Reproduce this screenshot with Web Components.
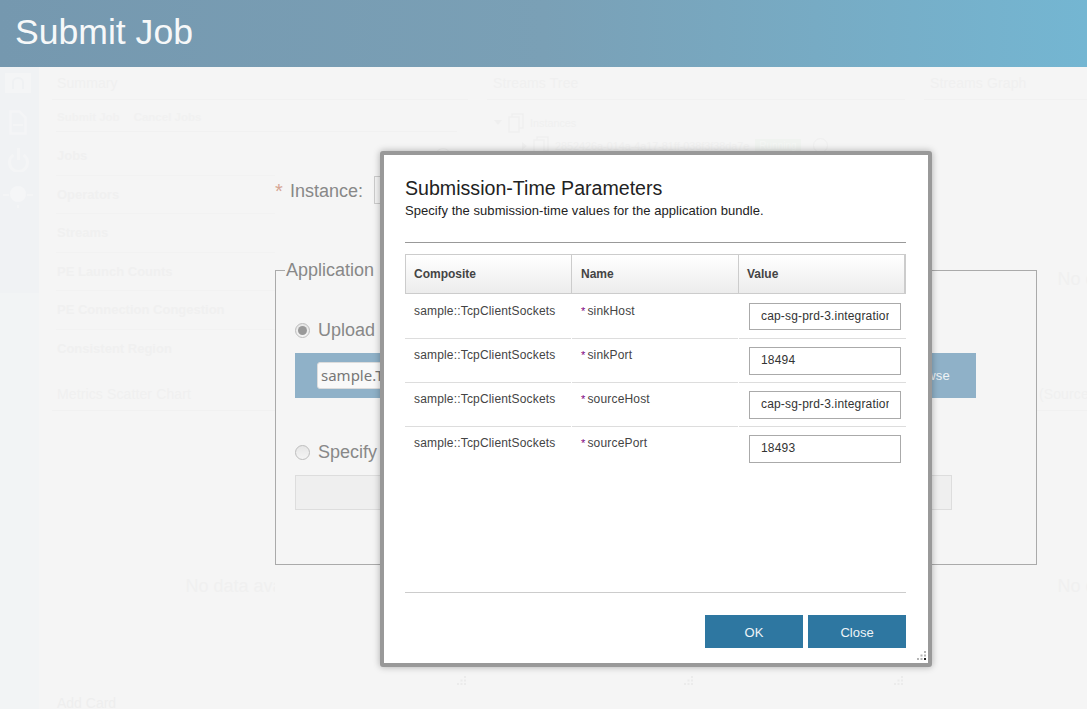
<!DOCTYPE html>
<html>
<head>
<meta charset="utf-8">
<title>Submit Job</title>
<style>
html, body { margin: 0; height: 100%; overflow: hidden; background: #f5f5f5; }
body { font-family: "Liberation Sans", Arial, sans-serif; }
</style>
</head>
<body>
<job-page>
    <job-header slot="header">Submit Job</job-header>

    <side-rail slot="rail"></side-rail>

    <dash-board slot="board">
        <dash-panel style="grid-area: a" heading="Summary">
            <sub-bar>Submit Job<span style="display:inline-block;width:14px"></span>Cancel Jobs</sub-bar>
            <metric-row help>Jobs</metric-row>
            <metric-row>Operators</metric-row>
            <metric-row>Streams</metric-row>
            <metric-row>PE Launch Counts</metric-row>
            <metric-row>PE Connection Congestion</metric-row>
            <metric-row last>Consistent Region</metric-row>
        </dash-panel>
        <dash-panel style="grid-area: b; --pad: 6px" heading="Streams Tree">
            <tree-view></tree-view>
        </dash-panel>
        <dash-panel style="grid-area: c; --pad: 6px" heading="Streams Graph">
            <no-data style="--top: 168px">No data available</no-data>
        </dash-panel>

        <dash-panel style="grid-area: d" heading="Metrics Scatter Chart" grip>
            <no-data style="--top: 164px">No data available</no-data>
        </dash-panel>
        <card-pair style="grid-area: m">
            <dash-panel grip></dash-panel>
            <dash-panel grip></dash-panel>
        </card-pair>
        <dash-panel style="grid-area: g; --pad: 8px" heading="Streams Metrics (Source)">
            <no-data style="--top: 164px">No data available</no-data>
        </dash-panel>
        <add-card style="grid-area: h">Add Card</add-card>
    </dash-board>

    <job-form slot="overlay"></job-form>

    <param-dialog slot="overlay" heading="Submission-Time Parameters"
        note="Specify the submission-time values for the application bundle.">
        <param-row name="sinkHost" value="cap-sg-prd-3.integration.ibmcloud.com"></param-row>
        <param-row name="sinkPort" value="18494"></param-row>
        <param-row name="sourceHost" value="cap-sg-prd-3.integration.ibmcloud.com"></param-row>
        <param-row name="sourcePort" value="18493" last></param-row>
        <dialog-button slot="actions">OK</dialog-button>
        <dialog-button slot="actions">Close</dialog-button>
    </param-dialog>
</job-page>

<script>
// small helper, every element just sets its shadow html once
class Base extends HTMLElement {
    constructor() {
        super();
        this.attachShadow({ mode: "open" });
        this.shadowRoot.innerHTML = this.markup();
    }
    markup() {
        return "<slot></slot>";
    }
}

const FAINT = "#f0f0f0";
const GRIP_DOTS = [[8, 0], [8, 3.5], [4.5, 3.5], [8, 7], [4.5, 7], [1, 7]];

function gripSvg(fill, dark) {
    const dots = GRIP_DOTS.map((d, i) =>
        `<rect x="${d[0]}" y="${d[1]}" width="2" height="2" fill="${i === dark ? "#222" : fill}"/>`).join("");
    return `<svg width="10" height="10" viewBox="0 0 10 10">${dots}</svg>`;
}

class JobPage extends Base {
    markup() {
        return `
        <style>
        :host { display: flex; flex-direction: column; position: relative; width: 100%; height: 709px; overflow: hidden; background: #f5f5f5; }
        .body { display: flex; flex: 1; min-height: 0; }
        </style>
        <slot name="header"></slot>
        <div class="body">
            <slot name="rail"></slot>
            <slot name="board"></slot>
        </div>
        <slot name="overlay"></slot>
        `;
    }
}

class JobHeader extends Base {
    markup() {
        return `
        <style>
        :host { display: flex; align-items: center; flex: none; height: 67px; padding: 0 15px 3px; box-sizing: border-box;
            background: linear-gradient(90deg, #7598af 0%, #7aa0b6 50%, #74b6d2 100%);
            color: #f6f8f9; font-size: 35.6px; }
        </style>
        <slot></slot>
        `;
    }
}

class SideRail extends Base {
    markup() {
        return `
        <style>
        :host { display: block; flex: none; width: 39px; background: #f2f4f5; }
        .top { display: flex; flex-direction: column; align-items: center; height: 226px; padding: 6px 3px 0 0; box-sizing: border-box; gap: 13px; background: #f0f2f4; }
        svg { display: block; fill: none; stroke: #f4f5f6; stroke-width: 3; }
        .screen { margin-bottom: 4px; }
        </style>
        <div class="top">
            <svg class="screen" width="26" height="20" viewBox="0 0 26 20"><rect x="0" y="0" width="26" height="20" fill="#f4f5f6" stroke="none"/><path d="M8 16V9a5 4 0 0 1 10 0v7" stroke="#eff1f3" stroke-width="2"/></svg>
            <svg width="18" height="25" viewBox="0 0 18 25"><path d="M1.5 1.5h9l6 6v16h-15z" stroke-width="2.5"/><path d="M4 15h10" stroke-width="2"/></svg>
            <svg width="21" height="24" viewBox="0 0 21 24"><path d="M5.5 7a9 9 0 1 0 10 0"/><path d="M10.5 0v12"/></svg>
            <svg width="30" height="23" viewBox="0 0 30 23"><circle cx="15" cy="9" r="8" fill="#f5f6f7" stroke="none"/><path d="M0 10h6M24 10h6M15 20v3" stroke-width="2"/></svg>
        </div>
        `;
    }
}

class DashBoard extends Base {
    markup() {
        return `
        <style>
        :host { display: grid; flex: 1; min-width: 0; overflow: hidden; padding-left: 13px; column-gap: 19px;
            grid-template-columns: 416px 418px 416px;
            grid-template-rows: 300px 312px auto;
            row-gap: 11px;
            grid-template-areas: "a b c" "d m g" "h h h";
            color: ${FAINT}; }
        </style>
        <slot></slot>
        `;
    }
}

class CardPair extends Base {
    markup() {
        return `
        <style>
        :host { display: grid; grid-template-columns: 208px 200px; column-gap: 10px; }
        </style>
        <slot></slot>
        `;
    }
}

class DashPanel extends Base {
    markup() {
        const grip = this.hasAttribute("grip") ? `<div class="grip">${gripSvg("#ebebeb")}</div>` : "";
        return `
        <style>
        :host { display: block; position: relative; min-width: 0; }
        h2 { margin: 0; height: 33px; padding: 8px 0 0 var(--pad, 5px); box-sizing: border-box; border-bottom: 1px solid #f1f1f1;
            font-size: 14px; letter-spacing: .12px; line-height: 16px; font-weight: normal; white-space: nowrap; }
        .grip { position: absolute; right: 2px; bottom: 4px; line-height: 0; }
        </style>
        <h2>${this.getAttribute("heading") || ""}</h2>
        <slot></slot>
        ${grip}
        `;
    }
}

class SubBar extends Base {
    markup() {
        return `
        <style>
        :host { display: block; height: 32px; margin: 0 11px 5px 4px; padding: 10px 0 0 1px; box-sizing: border-box;
            border-bottom: 1px solid #f1f1f1; font-size: 11.5px; line-height: 14px; font-weight: bold; color: #f1f1f1; }
        </style>
        <slot></slot>
        `;
    }
}

class MetricRow extends Base {
    markup() {
        const border = this.hasAttribute("last") ? "none" : "1px solid #f2f2f2";
        const help = this.hasAttribute("help") ? `<i></i>` : "";
        return `
        <style>
        :host { display: flex; align-items: center; justify-content: space-between; height: 38.5px; margin: 0 11px 0 4px; box-sizing: border-box;
            padding: 0 6px 0 1px; border-bottom: ${border}; font-size: 13px; font-weight: bold; }
        i { display: block; width: 16px; height: 16px; box-sizing: border-box; border: 1px solid #eeeeee; border-radius: 50%; }
        </style>
        <slot></slot>${help}
        `;
    }
}

class TreeView extends Base {
    markup() {
        const box = `<svg width="16" height="20" viewBox="0 0 16 20" fill="none" stroke="#efefef" stroke-width="1.5"><path d="M4 4V1h11v14h-4"/><rect x="1" y="4" width="10" height="15"/></svg>`;
        return `
        <style>
        :host { display: block; padding: 11px 0 0 7px; font-size: 10.8px; font-family: "Liberation Sans", sans-serif; }
        .row { display: flex; align-items: center; gap: 6px; height: 23px; white-space: nowrap; }
        .sub { padding-left: 28px; }
        .arrow { width: 0; height: 0; border: 4px solid transparent; border-top: 5px solid #efefef; border-bottom: 0; }
        .sub .arrow { border: 4px solid transparent; border-left: 5px solid #efefef; border-right: 0; }
        .badge { padding: 1px 4px; background: #f0f3f0; font-size: 10px; color: #f5f7f5; }
        .info { display: block; width: 13px; height: 13px; border: 1px solid #efefef; border-radius: 50%; margin-left: 6px; }
        </style>
        <div class="row"><span class="arrow"></span>${box}<span>Instances</span></div>
        <div class="row sub"><span class="arrow"></span>${box}<span>2852426a-014a-4a17-81ff-038f3f38da7e</span><span class="badge">Running</span><span class="info"></span></div>
        `;
    }
}

class NoData extends Base {
    markup() {
        return `
        <style>
        :host { display: block; padding: var(--top, 0) 10px 0 0; text-align: center; font-size: 18px; line-height: 22px; white-space: nowrap; }
        </style>
        <slot></slot>
        `;
    }
}

class AddCard extends Base {
    markup() {
        return `
        <style>
        :host { display: block; margin-top: -6px; padding-left: 5px; font-size: 14px; line-height: 16px; color: #eeeeee; }
        </style>
        <slot></slot>
        `;
    }
}

class RadioOption extends Base {
    markup() {
        const dot = this.hasAttribute("checked") ? `<i></i>` : "";
        return `
        <style>
        :host { display: flex; align-items: center; gap: 8px; height: 22px; font-size: 18px; color: #888888; white-space: nowrap; }
        .ring { display: flex; align-items: center; justify-content: center; width: 15px; height: 15px; box-sizing: border-box; border-radius: 50%;
            border: 1px solid #bdbdbd; background: linear-gradient(#e6e6e6, #f4f4f4); }
        i { display: block; width: 9px; height: 9px; border-radius: 50%; background: #999999; }
        </style>
        <span class="ring">${dot}</span>
        <slot></slot>
        `;
    }
}

class JobForm extends Base {
    markup() {
        return `
        <style>
        :host { display: block; position: absolute; left: 275px; top: 172px; width: 762px; height: 480px; background: #f5f5f5; color: #888888; font-size: 18px; }
        .instance { display: flex; align-items: center; height: 36px; }
        .star { width: 15px; padding-top: 2px; font-size: 20px; color: #d6a594; }
        .name { padding-top: 2px; }
        .pick { width: 200px; height: 28px; margin-left: 11px; box-sizing: border-box; border: 1px solid #cccccc; background: #f4f4f4; }
        fieldset { margin: 51px 0 0; padding: 0 19px 0; height: 306px; box-sizing: border-box; border: 1px solid #aaaaaa; }
        legend { margin-left: -10px; padding: 0 10px 0 1px; line-height: 22px; }
        .upload { margin-top: 38px; }
        .band { display: flex; align-items: center; justify-content: space-between; height: 45px; margin-top: 12px; padding: 0 26px 0 22px; width: 681px; box-sizing: border-box; background: #8fb1c8; }
        .file { width: 300px; height: 27px; padding-left: 3px; box-sizing: border-box; border: 1px solid #dcdcdc; border-radius: 3px; background: #f9f9f9;
            font-family: "Noto Sans", sans-serif; font-size: 15px; line-height: 25px; color: #777777; white-space: nowrap; overflow: hidden; }
        .browse { font-size: 13px; letter-spacing: .2px; color: #eef3f6; }
        .specify { margin-top: 43px; }
        .bundle { width: 657px; height: 35px; margin-top: 12px; box-sizing: border-box; border: 1px solid #dddddd; background: #efefef; }
        </style>
        <div class="instance"><span class="star">*</span><span class="name">Instance:</span><div class="pick"></div></div>
        <fieldset>
            <legend>Application</legend>
            <radio-option class="upload" checked>Upload</radio-option>
            <div class="band"><div class="file">sample.TcpClientSockets.sab</div><span class="browse">Browse</span></div>
            <radio-option class="specify">Specify</radio-option>
            <div class="bundle"></div>
        </fieldset>
        `;
    }
}

class ParamDialog extends Base {
    markup() {
        return `
        <style>
        :host { display: flex; flex-direction: column; position: absolute; left: 380px; top: 151px; width: 552px; height: 516px; box-sizing: border-box;
            padding: 21px 22px 15px 21px; background: #ffffff; border: 4px solid #999999; border-radius: 3px;
            box-shadow: 0 0 7px rgba(0,0,0,.3); color: #222222; }
        h1 { margin: 0; font-size: 19.6px; line-height: 24px; font-weight: normal; }
        p { margin: 1px 0 0; font-size: 13px; letter-spacing: .05px; line-height: 20px; }
        .rule { flex: none; height: 1px; margin-top: 21px; background: #999999; }
        .table { flex: 1; min-height: 0; margin-top: 11px; }
        .head { display: grid; grid-template-columns: 166px 167px 1fr; height: 40px; box-sizing: border-box;
            border: 1px solid #cccccc; border-right-width: 2px; background: linear-gradient(#ffffff, #ececec);
            font-size: 12px; font-weight: bold; color: #444444; }
        .head span { display: flex; align-items: center; padding-left: 8px; border-right: 1px solid #cccccc; }
        .head span:nth-child(2) { padding-left: 9px; }
        .head span:last-child { border-right: 0; }
        .rows { padding-top: 1px; }
        .foot { flex: none; height: 1px; background: #cccccc; }
        .actions { display: flex; justify-content: flex-end; gap: 5px; margin-top: 22px; }
        .grip { position: absolute; right: 2px; bottom: 2px; line-height: 0; }
        </style>
        <h1>${this.getAttribute("heading")}</h1>
        <p>${this.getAttribute("note")}</p>
        <div class="rule"></div>
        <div class="table">
            <div class="head"><span>Composite</span><span>Name</span><span>Value</span></div>
            <div class="rows"><slot></slot></div>
        </div>
        <div class="foot"></div>
        <div class="actions"><slot name="actions"></slot></div>
        <div class="grip">${gripSvg("#b4b4b4", 3)}</div>
        `;
    }
}

class ParamRow extends Base {
    markup() {
        const line = this.hasAttribute("last") ? "transparent" : "#dddddd";
        return `
        <style>
        :host { display: grid; grid-template-columns: 166px 166px 167px; column-gap: 1px; height: 44px; font-size: 12px; letter-spacing: .17px; color: #444444; }
        :host(:first-child) .box { height: 27px; }
        .cell { box-sizing: border-box; padding: 8px 0 0 9px; line-height: 16px; border-bottom: 1px solid ${line}; }
        .cell + .cell { padding-left: 9px; }
        b { color: #800080; font-weight: normal; font-size: 11px; margin-right: 2px; }
        .cell.value { padding: 8px 5px 0 10px; }
        .box { height: 28px; box-sizing: border-box; padding: 0 11px; border: 1px solid #aaaaaa; background: #ffffff; color: #333333; line-height: 24px; }
        .box span { display: block; white-space: nowrap; overflow: hidden; }
        </style>
        <div class="cell">sample::TcpClientSockets</div>
        <div class="cell"><b>*</b>${this.getAttribute("name")}</div>
        <div class="cell value"><div class="box"><span>${this.getAttribute("value")}</span></div></div>
        `;
    }
}

class DialogButton extends Base {
    markup() {
        return `
        <style>
        :host { display: flex; align-items: center; justify-content: center; width: 98px; height: 33px; padding-top: 1px; box-sizing: border-box; background: #2e77a1; color: #eef4f7; font-size: 13px; }
        </style>
        <slot></slot>
        `;
    }
}

customElements.define("job-page", JobPage);
customElements.define("job-header", JobHeader);
customElements.define("side-rail", SideRail);
customElements.define("dash-board", DashBoard);
customElements.define("card-pair", CardPair);
customElements.define("dash-panel", DashPanel);
customElements.define("sub-bar", SubBar);
customElements.define("metric-row", MetricRow);
customElements.define("tree-view", TreeView);
customElements.define("no-data", NoData);
customElements.define("add-card", AddCard);
customElements.define("radio-option", RadioOption);
customElements.define("job-form", JobForm);
customElements.define("param-dialog", ParamDialog);
customElements.define("param-row", ParamRow);
customElements.define("dialog-button", DialogButton);
</script>
</body>
</html>
